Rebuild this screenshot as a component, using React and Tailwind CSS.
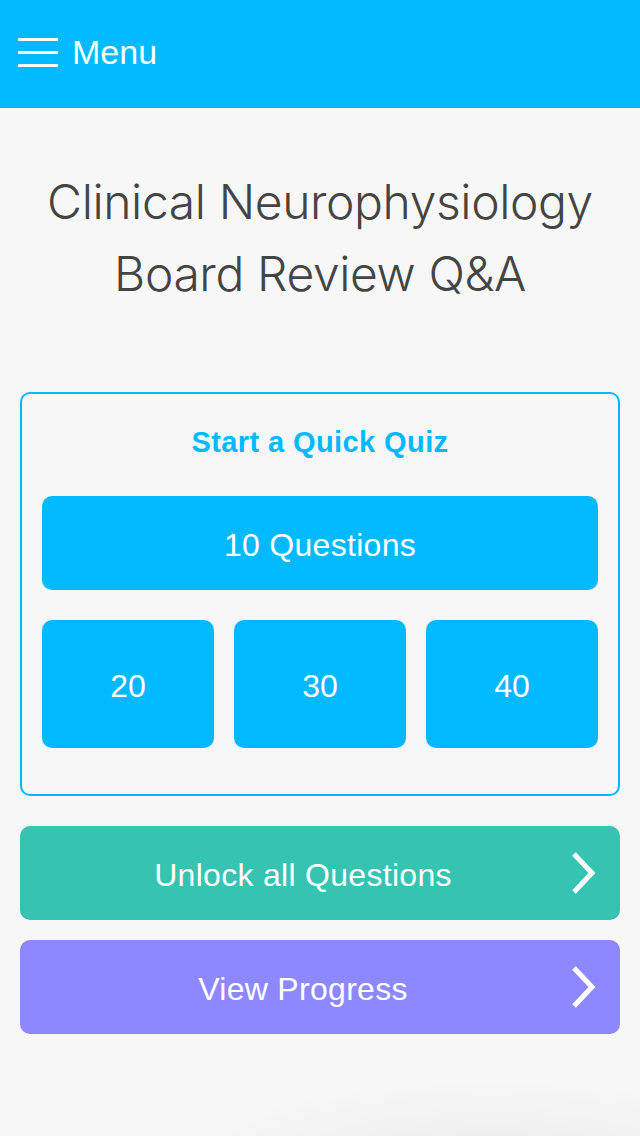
import React from "react";

function Chevron() {
  return (
    <svg width="28" height="44" viewBox="0 0 28 44" className="absolute right-[22px] top-1/2 -translate-y-1/2">
      <path d="M4 3 L22 22 L4 41" fill="none" stroke="white" strokeWidth="5" strokeLinecap="butt" strokeLinejoin="miter" />
    </svg>
  );
}

export default function App() {
  return (
    <div className="relative w-[640px] h-[1136px] overflow-hidden bg-[#f7f7f7]" style={{ fontFamily: '"Liberation Sans", Arial, sans-serif' }}>
      <div className="h-[108px] bg-[#00b9ff] border-b border-[#1aa6dc] flex items-center pl-[18px] pb-[4px]">
        <div className="flex flex-col gap-[10px] mr-[14px] mt-[2px]">
          <div className="w-[40px] h-[3px] bg-white" />
          <div className="w-[40px] h-[3px] bg-white" />
          <div className="w-[40px] h-[3px] bg-white" />
        </div>
        <span className="text-white text-[34px] leading-none">Menu</span>
      </div>

      <h1 className="mt-[58px] text-center text-[#444444] text-[48px] leading-[72px] font-light" style={{ fontFamily: 'Inter, "Liberation Sans", sans-serif', letterSpacing: "-0.4px" }}>
        Clinical Neurophysiology<br />Board Review Q&amp;A
      </h1>

      <div className="mx-[20px] mt-[82px] border-2 border-[#00b9ff] rounded-[10px] px-[20px] pt-[30px] pb-[46px]">
        <div className="text-center text-[#00b9ff] font-bold text-[29px] leading-[36px] tracking-[0.4px]">Start a Quick Quiz</div>
        <div className="mt-[36px] h-[94px] rounded-[10px] bg-[#00b9ff] flex items-center justify-center pt-[4px] text-white text-[32px] tracking-[0.3px]">10 Questions</div>
        <div className="mt-[30px] grid grid-cols-3 gap-[20px]">
          {["20", "30", "40"].map((n) => (
            <div key={n} className="h-[128px] rounded-[10px] bg-[#00b9ff] flex items-center justify-center pt-[3px] text-white text-[32px]">{n}</div>
          ))}
        </div>
      </div>

      <div className="mx-[20px] mt-[30px] relative h-[94px] rounded-[10px] bg-[#37c3b2] flex items-center justify-center pr-[34px] pt-[4px] text-white text-[32px] tracking-[0.3px]">
        Unlock all Questions
        <Chevron />
      </div>
      <div className="mx-[20px] mt-[20px] relative h-[94px] rounded-[10px] bg-[#8d88ff] flex items-center justify-center pr-[34px] pt-[4px] text-white text-[32px] tracking-[0.3px]">
        View Progress
        <Chevron />
      </div>

      <div className="absolute right-[-200px] bottom-[-160px] w-[700px] h-[220px] rounded-full bg-[radial-gradient(ellipse_at_center,rgba(0,0,0,0.06),rgba(0,0,0,0)_70%)]" />
    </div>
  );
}
